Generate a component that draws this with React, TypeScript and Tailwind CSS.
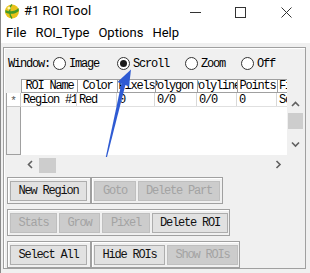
const mono = "font-['Liberation_Mono',monospace] text-[12px] tracking-[-1.2px] leading-none";

function Radio({ label, checked }: { label: string; checked?: boolean }) {
  return (
    <div className="flex items-center gap-[3px]">
      <span className="w-[13px] h-[13px] rounded-full border border-[#333] bg-white grid place-items-center">
        {checked && <span className="w-[7px] h-[7px] rounded-full bg-[#1a1a1a]" />}
      </span>
      <span className={mono}>{label}</span>
    </div>
  );
}

function Btn({ label, w, disabled }: { label: string; w: number; disabled?: boolean }) {
  return (
    <div
      style={{ width: w }}
      className={`h-[20px] shrink-0 grid place-items-center border ${mono} ${
        disabled ? 'bg-[#cccccc] border-[#bfbfbf] text-[#a3a3a3]' : 'bg-[#e1e1e1] border-[#adadad] text-[#111]'
      }`}
    >
      {label}
    </div>
  );
}

function Group({ children, w }: { children: React.ReactNode; w: number }) {
  return (
    <div
      style={{ width: w }}
      className="h-[27px] border border-[#a0a0a0] shadow-[inset_1px_1px_0_#fff] flex items-center gap-[2px] px-[2px]"
    >
      {children}
    </div>
  );
}

function Chevron({ dir }: { dir: 'up' | 'down' | 'left' | 'right' }) {
  const pts = {
    up: '1,5 4.5,1.5 8,5',
    down: '1,1.5 4.5,5 8,1.5',
    left: '5,1 1.5,4.5 5,8',
    right: '1.5,1 5,4.5 1.5,8',
  }[dir];
  const horiz = dir === 'left' || dir === 'right';
  return (
    <svg width={horiz ? 7 : 9} height={horiz ? 9 : 7} viewBox={horiz ? '0 0 7 9' : '0 0 9 7'}>
      <polyline points={pts} fill="none" stroke="#606060" strokeWidth="1.6" />
    </svg>
  );
}

// shift: how far the label is pushed left so its start is clipped, as in the reference
const HEAD: { label: string; w: number; center?: boolean; shift?: number }[] = [
  { label: 'ROI Name', w: 56, center: true },
  { label: 'Color', w: 40, center: true },
  { label: 'Pixels', w: 38, center: true },
  { label: 'Polygon', w: 42, shift: 5 },
  { label: 'Polyline', w: 40, shift: 6 },
  { label: 'Points', w: 40, center: true },
  { label: 'Fill', w: 10, shift: -1 },
];
const ROW = ['Region #1', 'Red', '0', '0/0', '0/0', '0', 'Solid'];

export default function App() {
  return (
    <div className="relative w-[310px] h-[273px] bg-white flex flex-col overflow-hidden border-l border-[#8a8a8a]">
      {/* title bar */}
      <div className="h-[22px] flex items-center pl-[3px]">
        <svg width="16" height="16" viewBox="0 0 16 16">
          <circle cx="8" cy="8.5" r="7" fill="#e8c21a" />
          <path d="M1.5 7 C5 9 11 9 14.5 5 L14.8 8 C11 11.5 5 11.5 1.3 9.5Z" fill="#3f9a2a" />
          <path d="M8 1.5 C5 4 5 12 8 15.5" fill="none" stroke="#3f9a2a" strokeWidth="1.3" />
          <circle cx="5" cy="5" r="1.6" fill="#fff6b0" />
        </svg>
        <span className="ml-[4px] font-['Roboto',sans-serif] text-[13px] text-black">#1 ROI Tool</span>
        <div className="ml-auto flex items-center">
          <svg width="46" height="22" viewBox="0 0 46 22"><line x1="18" y1="12.5" x2="29" y2="12.5" stroke="#333" /></svg>
          <svg width="46" height="22" viewBox="0 0 46 22"><rect x="17.5" y="7.5" width="10" height="10" fill="none" stroke="#333" /></svg>
          <svg width="46" height="22" viewBox="0 0 46 22"><path d="M17.5 7.5 L27.5 17.5 M27.5 7.5 L17.5 17.5" stroke="#333" /></svg>
        </div>
      </div>
      {/* menu bar */}
      <div className="h-[22px] flex items-center gap-[9px] pl-[5px] font-['Roboto',sans-serif] text-[13px] text-black">
        <span>File</span>
        <span>ROI_Type</span>
        <span>Options</span>
        <span>Help</span>
      </div>
      {/* body */}
      <div className="flex-1 bg-[#f0f0f0] pt-[4px] pl-[2px] pr-[4px] pb-[4px]">
        <div className="h-full border border-[#a0a0a0] shadow-[inset_1px_1px_0_#fff] flex flex-col pl-[2px] pr-[1px]">
          <div className="h-[30px] flex items-center pl-[2px] pt-[1px]">
            <span className={`${mono} mr-[3px]`}>Window:</span>
            <Radio label="Image" />
            <div className="w-[18px]" />
            <Radio label="Scroll" checked />
            <div className="w-[16px]" />
            <Radio label="Zoom" />
            <div className="w-[16px]" />
            <Radio label="Off" />
          </div>
          {/* table */}
          <div className="grid grid-cols-[15px_266px_16px] grid-rows-[14px_62px_18px] mt-[1px]">
            <div className="bg-[#f0f0f0]" />
            <div className="flex bg-white border-t border-[#a0a0a0] border-b overflow-hidden">
              {HEAD.map((h) => (
                <div
                  key={h.label}
                  style={{ width: h.w }}
                  className={`shrink-0 flex items-center ${h.center ? 'justify-center' : 'justify-start'} overflow-hidden whitespace-nowrap border-l border-[#a0a0a0] ${mono}`}
                >
                  <span style={h.shift ? { marginLeft: -h.shift } : undefined}>{h.label}</span>
                </div>
              ))}
            </div>
            <div className="bg-[#f0f0f0]" />
            <div className="flex flex-col border-l border-[#a0a0a0]">
              <div className="h-[14px] bg-white border-b border-r border-[#c8c8c8] grid place-items-center text-[#555] text-[11px] font-['Liberation_Mono',monospace]">
                *
              </div>
              <div className="flex-1 bg-[#f0f0f0] border-r border-b border-[#a0a0a0]" />
            </div>
            <div className="bg-white">
              <div className="flex h-[14px] border-b border-[#e0e0e0]">
                {ROW.map((c, i) => (
                  <div
                    key={i}
                    style={{ width: i === ROW.length - 1 ? 11 : HEAD[i].w }}
                    className={`shrink-0 flex items-center pl-[2px] overflow-hidden whitespace-nowrap ${
                      i === ROW.length - 1 ? '' : 'border-r border-[#d8d8d8]'
                    } ${mono}`}
                  >
                    {c}
                  </div>
                ))}
              </div>
            </div>
            <div className="bg-[#f0f0f0] flex flex-col items-center">
              <div className="h-[20px] grid place-items-center pt-[2px]"><Chevron dir="up" /></div>
              <div className="w-[15px] h-[16px] bg-[#cdcdcd]" />
              <div className="flex-1" />
              <div className="h-[18px] grid place-items-center pb-[4px]"><Chevron dir="down" /></div>
            </div>
            <div />
            <div className="flex items-center bg-[#f0f0f0]">
              <div className="w-[18px] grid place-items-center"><Chevron dir="left" /></div>
              <div className="w-[17px] h-[15px] bg-[#cdcdcd] mt-[2px]" />
              <div className="flex-1" />
              <div className="w-[18px] grid place-items-center"><Chevron dir="right" /></div>
            </div>
            <div />
          </div>
          {/* buttons */}
          <div className="flex flex-col gap-[5px] mt-[4px] pl-[1px]">
            <div className="flex">
              <Group w={84}><Btn label="New Region" w={77} /></Group>
              <Group w={132}>
                <Btn label="Goto" w={42} disabled />
                <Btn label="Delete Part" w={82} disabled />
              </Group>
            </div>
            <div className="flex">
              <Group w={223}>
                <Btn label="Stats" w={47} disabled />
                <Btn label="Grow" w={41} disabled />
                <Btn label="Pixel" w={48} disabled />
                <Btn label="Delete ROI" w={76} />
              </Group>
            </div>
            <div className="flex">
              <Group w={84}><Btn label="Select All" w={77} /></Group>
              <Group w={149}>
                <Btn label="Hide ROIs" w={71} />
                <Btn label="Show ROIs" w={71} disabled />
              </Group>
            </div>
          </div>
        </div>
      </div>
      {/* annotation arrow */}
      <svg className="absolute left-0 top-0 pointer-events-none" width="310" height="273" viewBox="0 0 310 273">
        <polygon points="120.5,83 124.5,84.5 106,157 104.8,157" fill="#2f5bd3" />
        <polygon points="130,69.5 116.5,82 128,86.5" fill="#2f5bd3" />
      </svg>
    </div>
  );
}
